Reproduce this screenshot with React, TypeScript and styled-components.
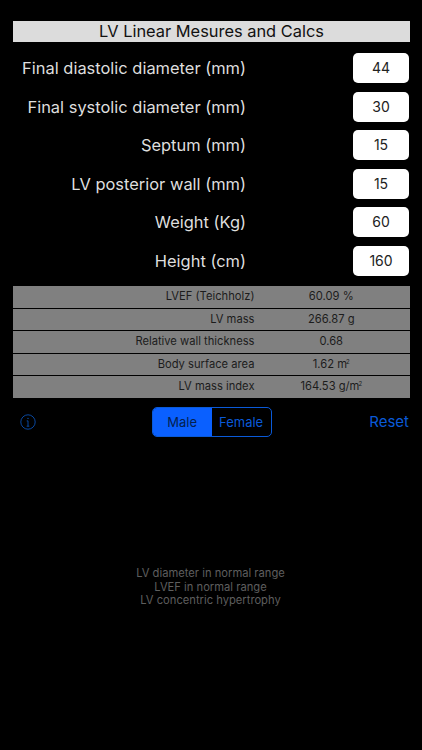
import * as React from 'react'
import styled, { createGlobalStyle } from 'styled-components'

const Global = createGlobalStyle`
  html, body {
    margin: 0;
    padding: 0;
    background: #000;
  }
  body {
    font-family: Inter, "Liberation Sans", sans-serif;
  }
`

const Screen = styled.div`
  width: 422px;
  height: 750px;
  background: #000;
  box-sizing: border-box;
  padding: 21px 12px 0 13px;
  display: flex;
  flex-direction: column;
  overflow: hidden;
`

const Title = styled.div`
  height: 21px;
  line-height: 21px;
  background: #dcdcdc;
  color: #111;
  font-size: 16.4px;
  text-align: center;
`

const Fields = styled.div`
  display: flex;
  flex-direction: column;
  gap: 8.6px;
  margin-top: 11px;
`

const FieldRow = styled.div`
  display: flex;
  align-items: center;
  justify-content: flex-end;
  height: 30px;
`

const FieldLabel = styled.div`
  color: #dedede;
  font-size: 16.45px;
  margin-right: 107px;
  white-space: nowrap;
`

const FieldInput = styled.div`
  width: 56px;
  height: 30px;
  margin-right: 1px;
  border-radius: 5px;
  background: #fff;
  color: #222;
  font-size: 14px;
  line-height: 29px;
  text-align: center;
`

const Results = styled.div`
  display: flex;
  flex-direction: column;
  gap: 1px;
  margin-top: 10px;
`

const ResultRow = styled.div`
  display: grid;
  grid-template-columns: 241.5px 1fr;
  height: 21.6px;
  line-height: 21.6px;
  background: #808080;
  color: #1c1c1c;
  font-size: 11.2px;
`

const ResultLabel = styled.div`
  text-align: right;
`

const ResultValue = styled.div`
  text-align: center;
  margin-right: 2px;
`

const Super = styled.sup`
  font-size: 6px;
  line-height: 0;
  vertical-align: 4px;
  margin-left: -1px;
`

const Controls = styled.div`
  display: flex;
  align-items: center;
  justify-content: space-between;
  height: 30px;
  margin-top: 9px;
`

const InfoButton = styled.div`
  width: 16px;
  height: 16px;
  margin-left: 7px;
  color: #0a4fb0;
`

const Segments = styled.div`
  display: flex;
  width: 120px;
  height: 30px;
  box-sizing: border-box;
  margin-left: 18px;
  border: 1px solid #0a5ad8;
  border-radius: 5px;
  overflow: hidden;
`

const Segment = styled.div<{ $active?: boolean }>`
  flex: 1;
  font-size: 13px;
  line-height: 28px;
  text-align: center;
  background: ${p => (p.$active ? '#0a60ff' : 'transparent')};
  color: ${p => (p.$active ? '#04214f' : '#0a5ad8')};
`

const ResetButton = styled.div`
  color: #0a5ad8;
  font-size: 15px;
  margin-right: 1px;
`

const Notes = styled.div`
  margin-top: 130px;
  color: #5e5e5e;
  font-size: 11.2px;
  line-height: 13.6px;
  text-align: center;
  margin-left: -2px;
`

const fields = [
  ['Final diastolic diameter (mm)', '44'],
  ['Final systolic diameter (mm)', '30'],
  ['Septum (mm)', '15'],
  ['LV posterior wall (mm)', '15'],
  ['Weight (Kg)', '60'],
  ['Height (cm)', '160'],
]

const App = () => (
  <Screen>
    <Global />
    <Title>LV Linear Mesures and Calcs</Title>
    <Fields>
      {fields.map(([label, value]) => (
        <FieldRow key={label}>
          <FieldLabel>{label}</FieldLabel>
          <FieldInput>{value}</FieldInput>
        </FieldRow>
      ))}
    </Fields>
    <Results>
      <ResultRow><ResultLabel>LVEF (Teichholz)</ResultLabel><ResultValue>60.09 %</ResultValue></ResultRow>
      <ResultRow><ResultLabel>LV mass</ResultLabel><ResultValue>266.87 g</ResultValue></ResultRow>
      <ResultRow><ResultLabel>Relative wall thickness</ResultLabel><ResultValue>0.68</ResultValue></ResultRow>
      <ResultRow><ResultLabel>Body surface area</ResultLabel><ResultValue>1.62 m<Super>2</Super></ResultValue></ResultRow>
      <ResultRow><ResultLabel>LV mass index</ResultLabel><ResultValue>164.53 g/m<Super>2</Super></ResultValue></ResultRow>
    </Results>
    <Controls>
      <InfoButton>
        <svg width="16" height="16" viewBox="0 0 16 16" fill="none" stroke="currentColor">
          <circle cx="8" cy="8" r="7.2" strokeWidth="0.9" />
          <path d="M8 6.8V12.2M6.7 6.9H8M6.7 12.2H9.3" strokeWidth="0.9" />
          <circle cx="8" cy="4.4" r="0.7" fill="currentColor" stroke="none" />
        </svg>
      </InfoButton>
      <Segments>
        <Segment $active>Male</Segment>
        <Segment>Female</Segment>
      </Segments>
      <ResetButton>Reset</ResetButton>
    </Controls>
    <Notes>
      <div>LV diameter in normal range</div>
      <div>LVEF in normal range</div>
      <div>LV concentric hypertrophy</div>
    </Notes>
  </Screen>
)

export default App
